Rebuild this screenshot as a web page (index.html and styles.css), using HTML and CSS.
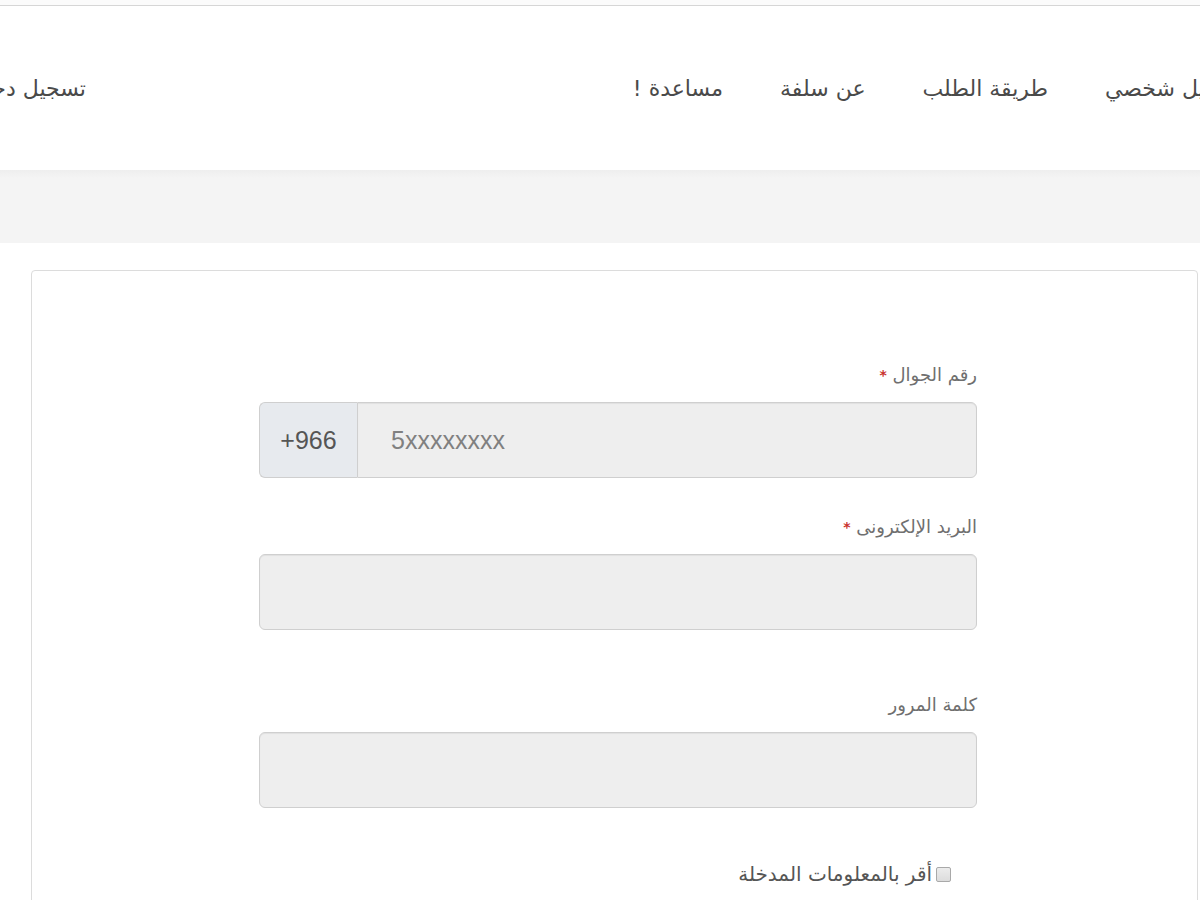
FILE: index.html
```html
<!DOCTYPE html>
<html lang="ar" dir="rtl">
<head>
    <meta charset="UTF-8">
    <meta name="viewport" content="width=device-width, initial-scale=1.0">
    <title>سلفة - تسجيل جديد</title>
    <link rel="stylesheet" href="styles.css">
</head>
<body>
    <div class="topbar"></div>
    <header class="navbar">
        <ul class="nav-links">
            <li><a href="#">تمويل شخصي</a></li>
            <li><a href="#">طريقة الطلب</a></li>
            <li><a href="#">عن سلفة</a></li>
            <li><a href="#">مساعدة !</a></li>
        </ul>
        <a class="login-link" href="#">تسجيل دخول</a>
    </header>
    <div class="page-band"></div>

    <main class="content">
        <div class="panel">
            <form class="signup-form">
                <div class="form-group">
                    <label>رقم الجوال <span class="required">*</span></label>
                    <div class="input-group">
                        <span class="input-addon">+966</span>
                        <input type="text" class="form-control" placeholder="5xxxxxxxx">
                    </div>
                </div>
                <div class="form-group group-email">
                    <label>البريد الإلكترونى <span class="required">*</span></label>
                    <input type="email" class="form-control">
                </div>
                <div class="form-group">
                    <label>كلمة المرور</label>
                    <input type="password" class="form-control">
                </div>
                <div class="checkbox">
                    <label><span class="check-box"></span>أقر بالمعلومات المدخلة</label>
                </div>
            </form>
        </div>
    </main>
</body>
</html>
```

FILE: styles.css
```css
html, body {
    margin: 0;
    height: 100%;
    overflow: hidden;
}
body {
    direction: rtl;
    background: #fff;
    font-family: "DejaVu Sans", "Liberation Sans", sans-serif;
    color: #555;
}
.topbar {
    height: 5px;
    background: #fbfbfb;
    border-bottom: 1px solid #d6d6d6;
}
.navbar {
    height: 164px;
    display: flex;
    align-items: center;
    margin-right: -35px;
    margin-left: -35px;
}
.nav-links {
    display: flex;
    gap: 57px;
    list-style: none;
    margin: 0;
    padding: 0;
}
.navbar a {
    color: #4a4a4a;
    text-decoration: none;
    font-size: 22px;
    white-space: nowrap;
}
.login-link {
    margin-right: auto;
}
.page-band {
    height: 73px;
    background: linear-gradient(#eeeeee, #f4f4f4 8px);
}
.content {
    padding: 27px 2px 0 31px;
}
.panel {
    border: 1px solid #dcdcdc;
    border-radius: 4px;
    height: 700px;
    padding-top: 92px;
}
.signup-form {
    width: 718px;
    margin-right: 220px;
}
.form-group {
    margin-bottom: 37px;
}
.form-group.group-email {
    margin-bottom: 63px;
}
.form-group label {
    display: block;
    font-size: 18px;
    line-height: 24px;
    color: #6f6f6f;
    margin-bottom: 15px;
}
.required {
    color: #c9302c;
    font-size: 14px;
    font-weight: bold;
    vertical-align: top;
}
.form-control {
    box-sizing: border-box;
    width: 100%;
    height: 76px;
    border: 1px solid #cfcfcf;
    border-radius: 6px;
    background: #eeeeee;
    box-shadow: inset 0 1px 1px rgba(0, 0, 0, 0.06);
    font-family: "Liberation Sans", Arial, sans-serif;
    font-size: 25px;
    color: #555;
    padding: 0 20px;
    outline: none;
}
.input-group {
    display: flex;
    direction: ltr;
}
.input-addon {
    box-sizing: border-box;
    width: 98px;
    height: 76px;
    display: flex;
    align-items: center;
    justify-content: center;
    background: #e7eaee;
    border: 1px solid #cfcfcf;
    border-right: none;
    border-radius: 6px 0 0 6px;
    font-family: "Liberation Sans", Arial, sans-serif;
    font-size: 25px;
    color: #555;
}
.input-group .form-control {
    flex: 1;
    border-radius: 0 6px 6px 0;
    padding-left: 33px;
    direction: ltr;
}
.form-control::placeholder {
    color: #808080;
}
.checkbox {
    padding-right: 26px;
    margin-top: 54px;
}
.checkbox label {
    display: inline-flex;
    align-items: center;
    gap: 4px;
    font-size: 20px;
    color: #555;
}
.check-box {
    width: 15px;
    height: 15px;
    box-sizing: border-box;
    border: 1px solid #a9a9a9;
    border-radius: 2px;
    background: linear-gradient(#ececec, #dcdcdc);
}
```
